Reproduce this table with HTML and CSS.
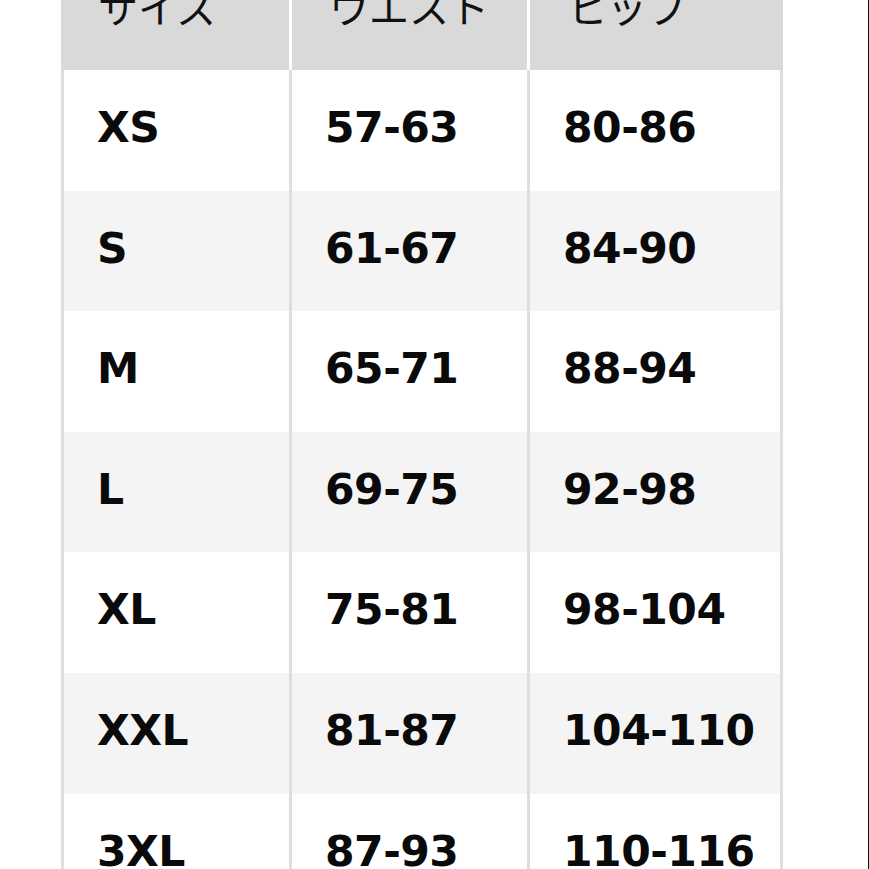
FILE: index.html
```html
<!DOCTYPE html>
<html lang="ja">
<head>
<meta charset="utf-8">
<title>サイズ表</title>
<link rel="stylesheet" href="styles.css">
</head>
<body>
<div class="page">
  <div class="chart">
    <div class="head">
      <div class="hcell">サイズ</div>
      <div class="hcell">ウエスト</div>
      <div class="hcell">ヒップ</div>
    </div>
    <div class="row">
      <div class="cell">XS</div><div class="cell">57-63</div><div class="cell">80-86</div>
    </div>
    <div class="row alt">
      <div class="cell">S</div><div class="cell">61-67</div><div class="cell">84-90</div>
    </div>
    <div class="row">
      <div class="cell">M</div><div class="cell">65-71</div><div class="cell">88-94</div>
    </div>
    <div class="row alt">
      <div class="cell">L</div><div class="cell">69-75</div><div class="cell">92-98</div>
    </div>
    <div class="row">
      <div class="cell">XL</div><div class="cell">75-81</div><div class="cell">98-104</div>
    </div>
    <div class="row alt">
      <div class="cell">XXL</div><div class="cell">81-87</div><div class="cell">104-110</div>
    </div>
    <div class="row">
      <div class="cell">3XL</div><div class="cell">87-93</div><div class="cell">110-116</div>
    </div>
  </div>
</div>
</body>
</html>
```
FILE: styles.css
```css
html, body {
  margin: 0;
  padding: 0;
  background: #ffffff;
}
body {
  overflow: hidden;
}
.page {
  width: 868px;
  height: 869px;
  border-right: 1px solid #111111;
  overflow: hidden;
  background: #ffffff;
}
.chart {
  width: 722px;
  margin: -50px 0 0 61px;
}
.head {
  display: grid;
  grid-template-columns: 228px 235px 253px;
  column-gap: 3px;
  height: 120px;
  background: #ffffff;
}
.hcell {
  background: #d9d9d9;
  display: flex;
  align-items: flex-end;
  padding: 0 0 44px 37px;
  font-family: "Noto Sans CJK JP", "Noto Sans", sans-serif;
  font-weight: 400;
  font-size: 40px;
  line-height: 40px;
  color: #111111;
  box-sizing: border-box;
}
.row {
  display: grid;
  grid-template-columns: 225px 235px 250px;
  column-gap: 3px;
  padding: 0 3px;
  height: 120.6px;
  background: #dedede;
}
.cell {
  background: #ffffff;
  display: flex;
  align-items: center;
  padding: 0 0 4px 33px;
  box-sizing: border-box;
  font-family: "DejaVu Sans", "Liberation Sans", sans-serif;
  font-weight: 700;
  font-size: 42.5px;
  line-height: 1;
  letter-spacing: -0.5px;
  color: #0a0a0a;
}
.row.alt .cell {
  background: #f4f4f4;
}
```
